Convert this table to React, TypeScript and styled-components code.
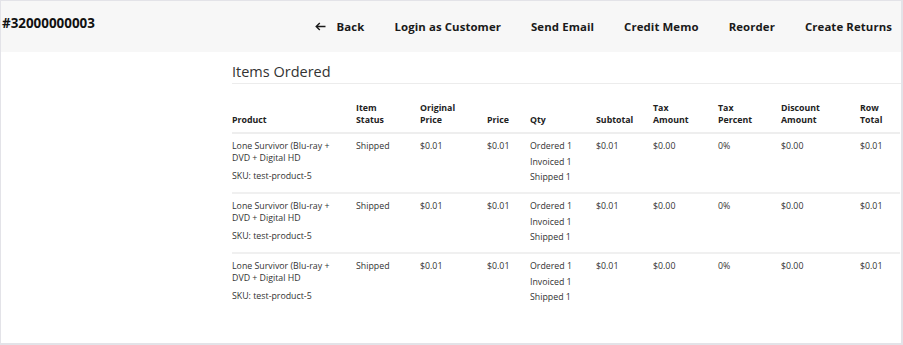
import styled, { createGlobalStyle } from 'styled-components'

type Item = {
  name: string
  sku: string
  status: string
  originalPrice: string
  price: string
  ordered: number
  invoiced: number
  shipped: number
  subtotal: string
  taxAmount: string
  taxPercent: string
  discount: string
  rowTotal: string
}

const item: Item = {
  name: 'Lone Survivor (Blu-ray + DVD + Digital HD',
  sku: 'test-product-5',
  status: 'Shipped',
  originalPrice: '$0.01',
  price: '$0.01',
  ordered: 1,
  invoiced: 1,
  shipped: 1,
  subtotal: '$0.01',
  taxAmount: '$0.00',
  taxPercent: '0%',
  discount: '$0.00',
  rowTotal: '$0.01',
}

const items: Item[] = [item, item, item]

const actions = ['Login as Customer', 'Send Email', 'Credit Memo', 'Reorder', 'Create Returns']

const columns: { label: string[]; width: number }[] = [
  { label: ['Product'], width: 124 },
  { label: ['Item', 'Status'], width: 64 },
  { label: ['Original', 'Price'], width: 67 },
  { label: ['Price'], width: 43 },
  { label: ['Qty'], width: 66 },
  { label: ['Subtotal'], width: 57 },
  { label: ['Tax', 'Amount'], width: 65 },
  { label: ['Tax', 'Percent'], width: 63 },
  { label: ['Discount', 'Amount'], width: 79 },
  { label: ['Row', 'Total'], width: 40 },
]

export default function App() {
  return (
    <>
      <GlobalStyle />
      <Page>
        <Header>
          <OrderId>#32000000003</OrderId>
          <Actions>
            <Action>
              <svg width="11" height="9" viewBox="0 0 11 9" fill="none" stroke="currentColor" strokeWidth="1.4">
                <path d="M10.5 4.5H1.2M4.8 0.9L1.2 4.5l3.6 3.6" />
              </svg>
              Back
            </Action>
            {actions.map((a) => (
              <Action key={a}>{a}</Action>
            ))}
          </Actions>
        </Header>
        <Content>
          <SectionTitle>Items Ordered</SectionTitle>
          <Table>
            <colgroup>
              {columns.map((c, i) => (
                <col key={i} style={{ width: c.width }} />
              ))}
            </colgroup>
            <thead>
              <tr>
                {columns.map((c, i) => (
                  <Th key={i}>
                    {c.label.map((l) => (
                      <div key={l}>{l}</div>
                    ))}
                  </Th>
                ))}
              </tr>
            </thead>
            <tbody>
              {items.map((it, i) => (
                <Row key={i}>
                  <Td>
                    <ProductName>{it.name}</ProductName>
                    <Sku>SKU: {it.sku}</Sku>
                  </Td>
                  <Td>{it.status}</Td>
                  <Td>{it.originalPrice}</Td>
                  <Td>{it.price}</Td>
                  <Td>
                    <QtyLine>Ordered {it.ordered}</QtyLine>
                    <QtyLine>Invoiced {it.invoiced}</QtyLine>
                    <QtyLine>Shipped {it.shipped}</QtyLine>
                  </Td>
                  <Td>{it.subtotal}</Td>
                  <Td>{it.taxAmount}</Td>
                  <Td>{it.taxPercent}</Td>
                  <Td>{it.discount}</Td>
                  <Td>{it.rowTotal}</Td>
                </Row>
              ))}
            </tbody>
          </Table>
        </Content>
      </Page>
    </>
  )
}

const GlobalStyle = createGlobalStyle`
  html, body {
    margin: 0;
    padding: 0;
    background: #fff;
  }
  body {
    font-family: 'Open Sans', 'Liberation Sans', sans-serif;
    color: #303030;
  }
`

const Page = styled.div`
  width: 903px;
  height: 345px;
  box-sizing: border-box;
  border: 1px solid #e3e3e8;
  border-right-width: 2px;
  border-bottom-width: 2px;
  overflow: hidden;
  background: #fff;
`

const Header = styled.header`
  height: 51px;
  background: #f7f7f7;
  display: flex;
  align-items: flex-start;
  justify-content: space-between;
  padding: 0 9px 0 1px;
`

const OrderId = styled.h1`
  margin: 0;
  padding-top: 13px;
  font-size: 13.4px;
  font-weight: 700;
  color: #111;
`

const Actions = styled.nav`
  display: flex;
  gap: 30px;
  padding-top: 18px;
`

const Action = styled.span`
  display: flex;
  align-items: center;
  gap: 11px;
  font-size: 11.4px;
  font-weight: 700;
  letter-spacing: 0.1px;
  color: #1a1a1a;
  white-space: nowrap;
`

const Content = styled.section`
  padding: 10px 0 0 231px;
`

const SectionTitle = styled.h2`
  margin: 0;
  padding-bottom: 2px;
  font-size: 14.5px;
  font-weight: 400;
  color: #333;
  border-bottom: 1px solid #ececec;
`

const Table = styled.table`
  margin-top: 18px;
  width: 668px;
  border-collapse: collapse;
  table-layout: fixed;
  font-size: 8.8px;
`

const Th = styled.th`
  text-align: left;
  vertical-align: bottom;
  font-weight: 700;
  line-height: 12px;
  padding: 0 0 6px;
  color: #222;
  border-bottom: 2px solid #eeeeee;
`

const Row = styled.tr`
  & + & td {
    border-top: 2px solid #f0f0f0;
  }
`

const Td = styled.td`
  vertical-align: top;
  padding: 6px 4px 0 0;
  height: 52px;
  line-height: 12px;
  color: #333;
`

const ProductName = styled.div`
  width: 102px;
`

const Sku = styled.div`
  margin-top: 6px;
`

const QtyLine = styled.div`
  line-height: 12px;
  & + & {
    margin-top: 3.5px;
  }
`
